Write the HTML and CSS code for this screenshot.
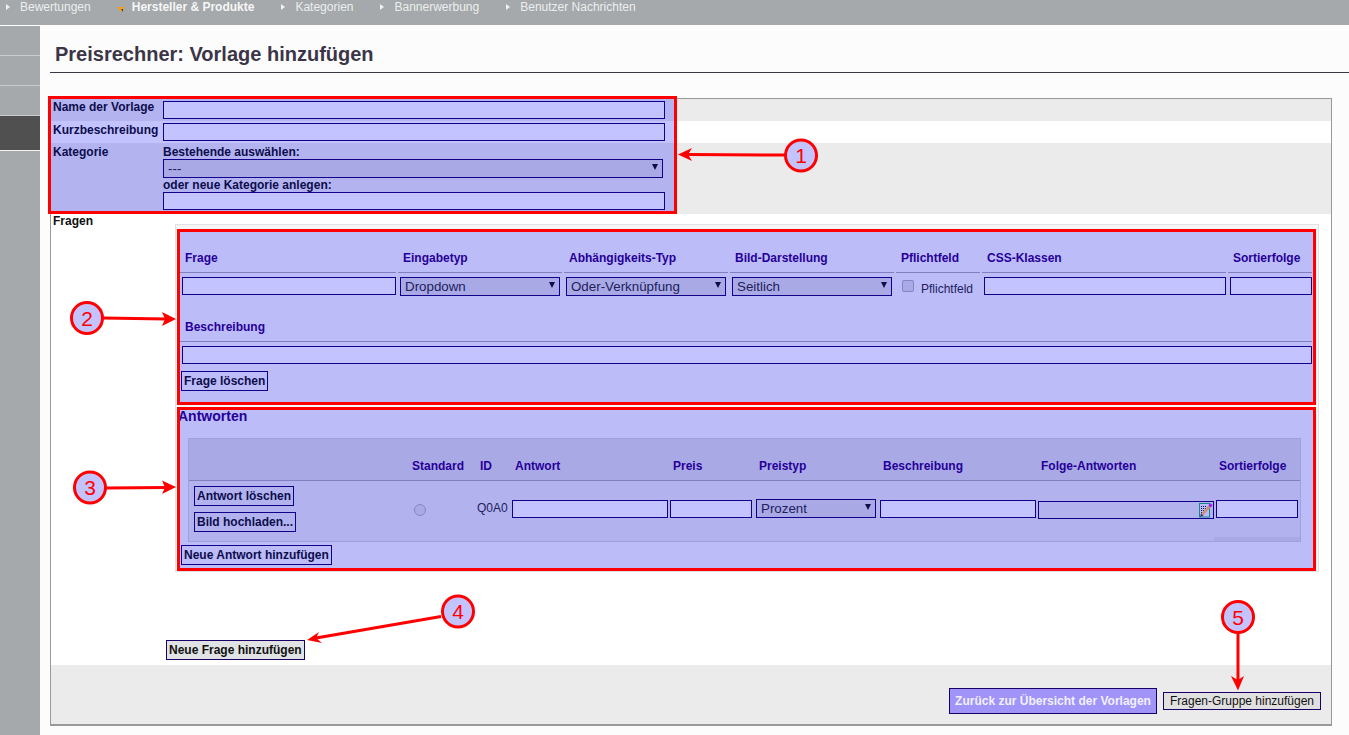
FILE: index.html
```html
<!DOCTYPE html>
<html lang="de">
<head>
<meta charset="utf-8">
<title>Preisrechner: Vorlage hinzufügen</title>
<link rel="stylesheet" href="styles.css">
</head>
<body>
<nav class="topbar">
  <a class="nav-item"><i class="tri"></i>Bewertungen</a>
  <a class="nav-item nav-open"><i class="tri-open"></i>Hersteller &amp; Produkte</a>
  <a class="nav-item"><i class="tri"></i>Kategorien</a>
  <a class="nav-item"><i class="tri"></i>Bannerwerbung</a>
  <a class="nav-item"><i class="tri"></i>Benutzer Nachrichten</a>
</nav>
<div class="layout">
  <aside class="sidebar">
    <div class="side-item"></div>
    <div class="side-item"></div>
    <div class="side-item"></div>
    <div class="side-item side-active"></div>
  </aside>
  <main class="main">
    <header class="page-head"><h1>Preisrechner: Vorlage hinzufügen</h1></header>
    <form class="panel">
      <div class="row row-grey">
        <label class="row-label">Name der Vorlage</label>
        <div class="row-field"><input class="inp inp-wide" type="text"></div>
      </div>
      <div class="row row-white">
        <label class="row-label row-label-low">Kurzbeschreibung</label>
        <div class="row-field"><input class="inp inp-wide" type="text"></div>
      </div>
      <div class="row row-grey row-cat">
        <label class="row-label">Kategorie</label>
        <div class="row-field cat-field">
          <div class="cat-text">Bestehende auswählen:</div>
          <div class="sel-wrap sel-cat"><select class="sel"><option>---</option></select></div>
          <div class="cat-text">oder neue Kategorie anlegen:</div>
          <input class="inp inp-wide" type="text">
        </div>
      </div>
      <div class="row row-questions">
        <label class="row-label">Fragen</label>
        <div class="questions">
          <section class="fieldset">
            <div class="question">
              <div class="q-grid">
                <div class="th">Frage</div>
                <div class="th">Eingabetyp</div>
                <div class="th">Abhängigkeits-Typ</div>
                <div class="th">Bild-Darstellung</div>
                <div class="th">Pflichtfeld</div>
                <div class="th">CSS-Klassen</div>
                <div class="th">Sortierfolge</div>
                <div class="td"><input class="inp inp-full" type="text"></div>
                <div class="td td-sel"><div class="sel-wrap"><select class="sel"><option>Dropdown</option></select></div></div>
                <div class="td td-sel"><div class="sel-wrap"><select class="sel"><option>Oder-Verknüpfung</option></select></div></div>
                <div class="td td-sel"><div class="sel-wrap"><select class="sel"><option>Seitlich</option></select></div></div>
                <label class="td td-check"><input class="check" type="checkbox"><span>Pflichtfeld</span></label>
                <div class="td"><input class="inp inp-full" type="text"></div>
                <div class="td"><input class="inp inp-full" type="text"></div>
              </div>
              <div class="th th-desc">Beschreibung</div>
              <input class="inp inp-desc" type="text">
              <button class="btn btn-del" type="button">Frage löschen</button>
            </div>
            <div class="answers">
              <h3 class="answers-title">Antworten</h3>
              <div class="a-table">
                <div class="a-grid a-head">
                  <div class="ath"></div>
                  <div class="ath ath-std">Standard</div>
                  <div class="ath ath-id">ID</div>
                  <div class="ath">Antwort</div>
                  <div class="ath">Preis</div>
                  <div class="ath">Preistyp</div>
                  <div class="ath">Beschreibung</div>
                  <div class="ath">Folge-Antworten</div>
                  <div class="ath">Sortierfolge</div>
                </div>
                <div class="a-grid a-row">
                  <div class="a-actions">
                    <button class="btn" type="button">Antwort löschen</button>
                    <button class="btn" type="button">Bild hochladen...</button>
                  </div>
                  <div class="a-radio"><input class="radio" type="radio"></div>
                  <div class="a-id">Q0A0</div>
                  <div class="a-cell"><input class="inp inp-full" type="text"></div>
                  <div class="a-cell a-cell-price"><input class="inp inp-full" type="text"></div>
                  <div class="a-cell a-cell-sel"><div class="sel-wrap"><select class="sel"><option>Prozent</option></select></div></div>
                  <div class="a-cell"><input class="inp inp-full" type="text"></div>
                  <div class="a-cell a-cell-follow">
                    <div class="follow">
                      <svg class="edit-icon" width="14" height="16" viewBox="0 0 14 16">
                        <rect x="0.5" y="1.5" width="10" height="13.500" fill="#f4f4ff" stroke="#20b060"/>
                        <g fill="#111">
                          <rect x="2" y="4" width="1" height="1"/><rect x="4" y="4" width="1" height="1"/><rect x="6" y="4" width="1" height="1"/>
                          <rect x="2" y="6" width="1" height="1"/><rect x="4" y="6" width="1" height="1"/><rect x="6" y="6" width="1" height="1"/>
                          <rect x="2" y="8" width="1" height="1"/><rect x="4" y="8" width="1" height="1"/>
                          <rect x="2" y="10" width="1" height="1"/>
                        </g>
                        <line x1="3" y1="12.500" x2="10.500" y2="4.500" stroke="#ffc850" stroke-width="3"/>
                        <path d="M1 15 L2 11.500 L4.500 13.500 Z" fill="#444"/>
                        <line x1="10.500" y1="4.500" x2="12.500" y2="2.300" stroke="#e020e0" stroke-width="3"/>
                      </svg>
                    </div>
                  </div>
                  <div class="a-cell a-cell-sort"><input class="inp inp-full" type="text"><div class="strip"></div></div>
                </div>
              </div>
              <button class="btn btn-new-answer" type="button">Neue Antwort hinzufügen</button>
            </div>
          </section>
          <button class="btn btn-light btn-new-q" type="button">Neue Frage hinzufügen</button>
        </div>
      </div>
      <footer class="panel-foot">
        <button class="btn-back" type="button">Zurück zur Übersicht der Vorlagen</button>
        <button class="btn-group" type="button">Fragen-Gruppe hinzufügen</button>
      </footer>
    </form>
  </main>
</div>

<div class="frame frame-1"></div>
<div class="frame frame-2"></div>
<div class="frame frame-3"></div>
<svg class="callouts" width="1349" height="735" viewBox="0 0 1349 735">
  <g class="arrow">
    <line x1="786" y1="155" x2="688" y2="154.500"/>
    <polygon points="678,154.500 692,148 688,154.500 692,161"/>
    <line x1="103" y1="318" x2="166" y2="319"/>
    <polygon points="176,319 162,312 165,319 162,326"/>
    <line x1="106" y1="488" x2="166" y2="487.500"/>
    <polygon points="176,487 162,480.500 165,487.500 162,494"/>
    <line x1="441" y1="616.500" x2="316" y2="638"/>
    <polygon points="307,640 319,632 316,638 322,643"/>
    <line x1="1238" y1="633" x2="1238" y2="680"/>
    <polygon points="1238,690.500 1231,676 1238,680 1244,676"/>
  </g>
  <g class="bubble">
    <circle cx="801" cy="155.500" r="15.500"/><circle cx="87" cy="318" r="15.500"/><circle cx="90" cy="487.500" r="15.500"/><circle cx="458" cy="611.500" r="15.500"/><circle cx="1238" cy="617" r="15.500"/>
  </g>
  <g class="bubble-num">
    <text x="801" y="163">1</text><text x="87" y="325.500">2</text><text x="90" y="495">3</text><text x="458" y="619">4</text><text x="1238" y="624.500">5</text>
  </g>
</svg>
</body>
</html>
```

FILE: styles.css
```css
* { box-sizing: border-box; }
html, body { margin: 0; height: 735px; overflow: hidden; }
body {
  background: #fcfcfc;
  font: 12px/14px "Liberation Sans", Arial, sans-serif;
  color: #111;
  position: relative;
}

/* top navigation */
.topbar {
  height: 25px;
  background: #a5a9ab;
  display: flex;
  gap: 27px;
  padding-left: 6px;
  color: #eceeee;
}
.nav-item { display: flex; align-items: flex-start; line-height: 14px; }
.nav-open { font-weight: bold; color: #f6f6f6; }
.tri {
  width: 14px;
  flex: none;
  height: 14px;
  position: relative;
}
.tri::before {
  content: "";
  position: absolute;
  left: 0;
  top: 4px;
  border-left: 4px solid #f0f0f0;
  border-top: 3.5px solid transparent;
  border-bottom: 3.5px solid transparent;
}
.tri-open {
  width: 14px;
  flex: none;
  height: 14px;
  position: relative;
  margin-left: -1px;
  margin-right: 1px;
}
.tri-open::before {
  content: "";
  position: absolute;
  left: 0;
  top: 7px;
  border-top: 5px solid #f2a020;
  border-left: 4.5px solid transparent;
  border-right: 4.5px solid transparent;
}
.tri-open::after {
  content: "";
  position: absolute;
  left: 4px;
  top: 9px;
  border-top: 3px solid #4a4030;
  border-left: 2.500px solid transparent;
  border-right: 0 solid transparent;
}

/* layout */
.layout { display: flex; height: 710px; }
.sidebar {
  width: 40px;
  flex: none;
  margin-top: 1px;
  background: #a5a9ab;
}
.side-item { height: 30px; border-bottom: 1px solid #c9cccd; }
.side-active { height: 35px; background: #505050; border-bottom: 1px solid #f4f4f4; }
.main { flex: 1; min-width: 0; padding: 0 17px 0 10px; }

.page-head {
  margin-right: -17px;
  padding: 18px 0 6px 5px;
  border-bottom: 1px solid #3b3547;
}
.page-head h1 {
  margin: 0;
  font-size: 20px;
  line-height: 23px;
  font-weight: bold;
  color: #3b3547;
}

/* form panel */
.panel {
  margin-top: 25px;
  height: 628px;
  border: 1px solid #999;
  border-bottom-width: 2px;
  background: #fff;
  display: flex;
  flex-direction: column;
}
.row { display: flex; }
.row-grey { background: #ebebeb; }
.row-white { background: #fff; }
.row-label {
  width: 112px;
  flex: none;
  padding: 1px 0 0 2px;
  font-weight: bold;
}
.row-label-low { padding-top: 2px; }
.row-field { padding: 2px 0; }
.row-cat { height: 71px; }
.row-cat .row-label { padding-top: 2px; }
.cat-field { padding: 2px 0 4px; }
.cat-text { font-weight: bold; }
.row-questions { flex: 1; }
.row-questions .row-label { padding-top: 0; }
.questions { flex: 1; min-width: 0; }

/* controls */
.inp {
  display: block;
  height: 18px;
  margin: 0;
  padding: 0 3px;
  background: #fff;
  border: 1px solid #1a0066;
  border-radius: 0;
  outline: 0;
  font: 12px "Liberation Sans", Arial, sans-serif;
}
.inp-wide { width: 502px; }
.inp-full { width: 100%; }
.sel-wrap { position: relative; height: 19px; }
.sel-wrap::after {
  content: "";
  position: absolute;
  right: 5px;
  top: 5px;
  border-top: 6px solid #111;
  border-left: 3px solid transparent;
  border-right: 3px solid transparent;
  pointer-events: none;
}
.sel-cat { width: 500px; }
.sel {
  appearance: none;
  -webkit-appearance: none;
  display: block;
  width: 100%;
  height: 100%;
  margin: 0;
  padding: 0 0 0 4px;
  background: #dedede;
  border: 1px solid #1a0066;
  border-radius: 0;
  color: #2a2a2a;
  font: 13.33px "Liberation Sans", Arial, sans-serif;
}
.btn {
  display: block;
  height: 20px;
  margin: 0;
  padding: 0 2px;
  background: transparent;
  border: 1px solid #1a0066;
  border-radius: 0;
  color: #111;
  font: bold 12px/18px "Liberation Sans", Arial, sans-serif;
  white-space: nowrap;
}
.btn-light { background: #e0e2e4; }
.check, .radio {
  appearance: none;
  -webkit-appearance: none;
  margin: 0;
  background: #dedede;
  border: 1px solid #b0b0b4;
  flex: none;
  width: 12px;
  height: 12px;
}
.check { border-radius: 2px; }
.radio { display: block; border-radius: 50%; }

/* question block */
.fieldset {
  width: 1144px;
  height: 348px;
  margin: 10px 0 0 12px;
  background: #f6f6f6;
  border: 1px solid #e2e2e2;
}
.question { height: 179px; padding: 7px 0 0 4px; }
.q-grid {
  display: grid;
  grid-template-columns: 216px 164px 164px 164px 84px 244px 84px;
  column-gap: 2px;
  width: 1132px;
}
.th {
  height: 41px;
  padding: 0 0 7px 5px;
  display: flex;
  align-items: flex-end;
  border-bottom: 1px solid #a8a8ac;
  color: #33007a;
  font-weight: bold;
  white-space: nowrap;
}
.td { height: 25px; padding: 4px 0 0 2px; }
.td-sel { padding-right: 2px; }
.td-check { display: flex; align-items: flex-start; padding: 7px 0 0 6px; color: #2a2a2a; }
.td-check span { margin: 2px 0 0 7px; }
.th-desc { width: 1132px; height: 44px; }
.inp-desc { width: 1130px; margin: 4px 0 0 2px; }
.btn-del { margin: 7px 0 0 1px; }

/* answers block */
.answers { padding-top: 4px; }
.answers-title {
  margin: 0 0 14px 2px;
  font-size: 14px;
  line-height: 16px;
  font-weight: bold;
  color: #33007a;
}
.a-table {
  width: 1113px;
  margin-left: 12px;
  background: #e9e9e9;
  border: 1px solid #d1d1d1;
}
.a-grid {
  display: grid;
  grid-template-columns: 221px 67px 33px 158px 86px 124px 158px 178px 86px;
}
.a-head {
  height: 42px;
  background: #dedede;
  border-bottom: 1px solid #a8a8ac;
  align-items: end;
}
.ath {
  padding: 0 0 7px 5px;
  color: #33007a;
  font-weight: bold;
  white-space: nowrap;
}
.ath-std { padding-left: 2px; }
.ath-id { padding-left: 3px; }
.a-row { height: 60px; }
.a-actions {
  padding: 5px 0 0 5px;
  display: flex;
  flex-direction: column;
  align-items: flex-start;
  gap: 6px;
}
.a-radio { padding: 23px 0 0 4px; }
.a-id { padding-top: 20px; color: #2a2a2a; }
.a-cell { padding: 19px 0 0 2px; }
.a-cell-price { padding-right: 2px; }
.a-cell-sel { padding: 18px 2px 0 2px; }
.a-cell-follow { padding: 20px 0 0 2px; }
.a-cell-sort { display: flex; flex-direction: column; padding: 19px 0 0 2px; }
.a-cell-sort .inp { width: 82px; flex: none; }
.strip { margin: auto 0 0 -2px; height: 4px; background: #dedede; flex: none; }
.follow {
  position: relative;
  height: 18px;
  border: 1px solid #1a0066;
}
.edit-icon { position: absolute; right: 0; top: 0; display: block; }
.btn-new-answer { margin: 3px 0 0 5px; }
.btn-new-q { margin: 68px 0 0 3px; }

/* footer */
.panel-foot {
  height: 59px;
  flex: none;
  padding: 13px 10px 0 0;
  background: #ebebeb;
  display: flex;
  justify-content: flex-end;
  align-items: center;
  gap: 6px;
}
.btn-back {
  height: 26px;
  width: 208px;
  padding: 0;
  background: #a094f8;
  border: 1px solid #1a0066;
  border-radius: 0;
  color: #f2f0ff;
  font: bold 12px "Liberation Sans", Arial, sans-serif;
}
.btn-group {
  height: 18px;
  width: 158px;
  padding: 0;
  background: #e0e0e0;
  border: 1px solid #1a0066;
  border-radius: 0;
  color: #111;
  font: 12px "Liberation Sans", Arial, sans-serif;
}

/* annotation overlays */
.frame {
  position: absolute;
  background: rgba(0, 0, 255, 0.235);
  border: 3px solid #f00;
  pointer-events: none;
}
.frame-1 { left: 48px; top: 96px; width: 629px; height: 118px; }
.frame-2 { left: 177px; top: 229px; width: 1139px; height: 176px; }
.frame-3 { left: 177px; top: 407px; width: 1139px; height: 164px; }
.callouts { position: absolute; left: 0; top: 0; pointer-events: none; }
.arrow line { stroke: #f00; stroke-width: 3; }
.arrow polygon { fill: #f00; }
.bubble circle { fill: #c3c3ff; stroke: #f00; stroke-width: 3; }
.bubble-num text {
  fill: #f00;
  font: 21px "Liberation Sans", Arial, sans-serif;
  text-anchor: middle;
}
```
